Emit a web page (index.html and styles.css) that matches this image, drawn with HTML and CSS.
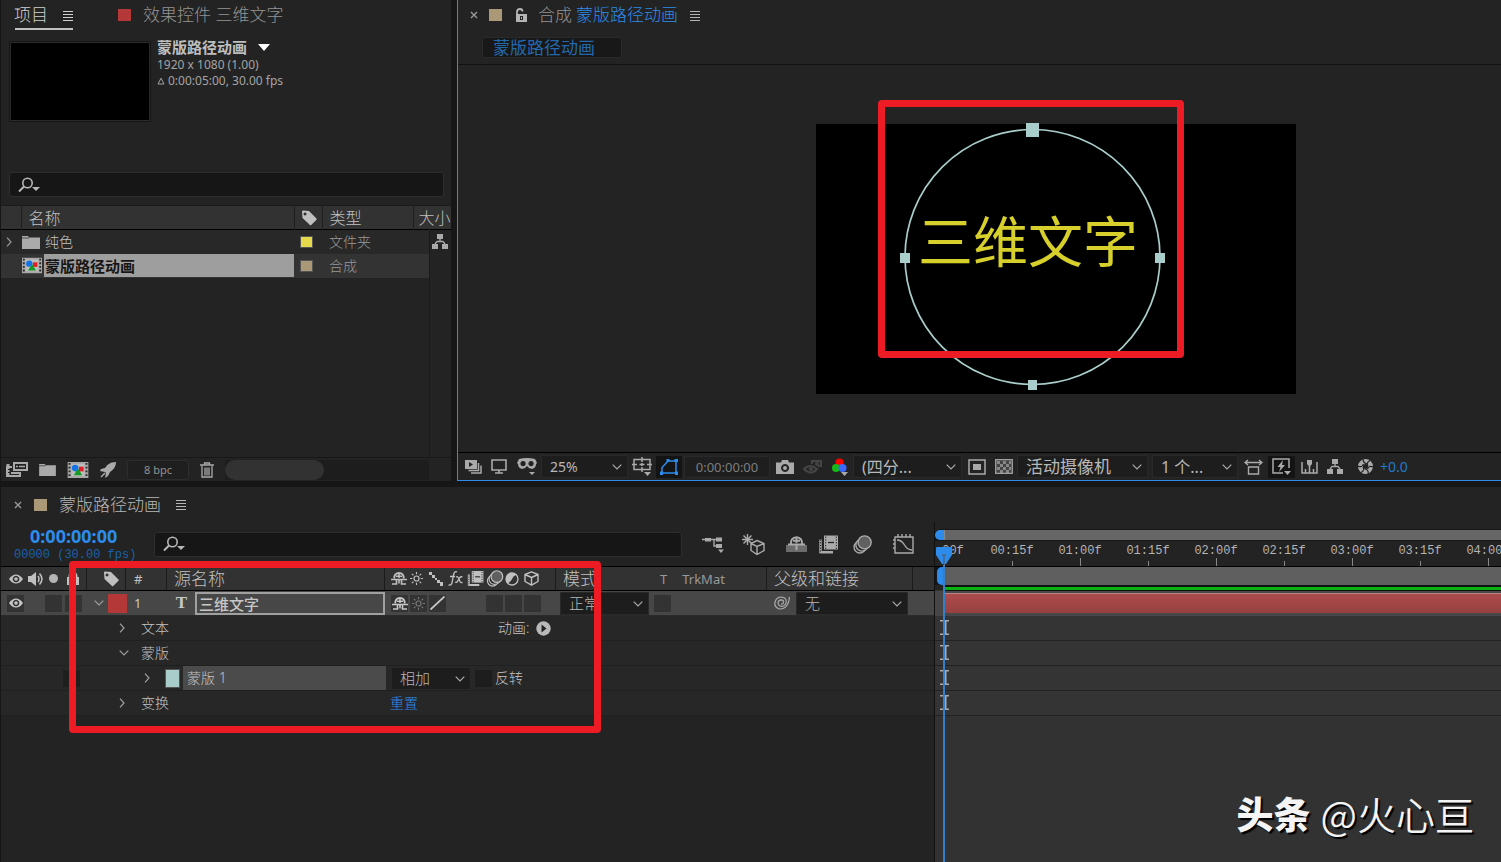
FILE: index.html
```html
<!DOCTYPE html>
<html lang="zh-CN">
<head>
<meta charset="utf-8">
<title>蒙版路径动画</title>
<link rel="stylesheet" href="styles.css">
</head>
<body>
<svg class="sprite" aria-hidden="true">
  <symbol id="menu" viewBox="0 0 12 11"><path d="M1 1.500h10M1 4.500h10M1 7.500h10M1 10.500h10" stroke="currentColor" stroke-width="1.200" fill="none"/></symbol>
  <symbol id="close" viewBox="0 0 8 8"><path d="M1 1l6 6M7 1L1 7" stroke="currentColor" stroke-width="1.400"/></symbol>
  <symbol id="search" viewBox="0 0 22 16"><circle cx="9.500" cy="6" r="4.700" fill="none" stroke="currentColor" stroke-width="1.600"/><path d="M6 9.500L1 14.500" stroke="currentColor" stroke-width="2"/><path d="M14 10h8l-4 4z" fill="currentColor"/></symbol>
  <symbol id="chev" viewBox="0 0 10 6"><path d="M.7.7L5 5 9.300.7" fill="none" stroke="currentColor" stroke-width="1.200"/></symbol>
  <symbol id="right" viewBox="0 0 6 10"><path d="M1 .7L5 5 1 9.300" fill="none" stroke="currentColor" stroke-width="1.200"/></symbol>
  <symbol id="tag" viewBox="0 0 16 16"><path fill="currentColor" fill-rule="evenodd" d="M1 1.500Q1 .5 2 .5L8 1l7.500 7.500q.5.700 0 1.200L10.200 15q-.7.500-1.200 0L1.500 8zM4 2.500a1.500 1.500 0 1 0 .1 0z"/></symbol>
  <symbol id="folder" viewBox="0 0 18 14"><path fill="currentColor" d="M0 1h6l1 1.500h11V14H0z"/><path d="M0 3h7" stroke="#333" stroke-width=".8"/></symbol>
  <symbol id="tree" viewBox="0 0 16 15"><path fill="currentColor" d="M5 0h6v5H5zM0 10h6v5H0zM10 10h6v5h-6z"/><path d="M8 5v3M3 10L5 7.500h6L13 10" fill="none" stroke="currentColor" stroke-width="1.300"/></symbol>
  <symbol id="comp" viewBox="0 0 22 17"><path fill="#a8a8a8" d="M0 0h22v17H0z"/><path d="M2 1v16M20 1v16" stroke="#292929" stroke-width="2" stroke-dasharray="2 2"/><path fill="#bdbdbd" d="M4 2h14v13H4z"/><circle cx="8" cy="6.500" r="3.500" fill="#1473e6"/><path fill="#e01f26" d="M12 5h5v5h-5z"/><path fill="#159b25" d="M11 7l4.500 7h-9z"/></symbol>
  <symbol id="eye" viewBox="0 0 14 10"><path fill="currentColor" fill-rule="evenodd" d="M0 5C4-1 10-1 14 5 10 11 4 11 0 5zM7 1.700a3.300 3.300 0 1 0 .1 0z"/><circle cx="7" cy="5" r="1.800" fill="currentColor"/></symbol>
  <symbol id="speaker" viewBox="0 0 16 14"><path fill="currentColor" d="M0 4h3l5-4v14L3 10H0z"/><path d="M10 4q2 3 0 6M11.500 1.500q5 5.500 0 11" fill="none" stroke="currentColor" stroke-width="1.500"/></symbol>
  <symbol id="lock" viewBox="0 0 12 13"><path fill="currentColor" d="M0 5h12v8H0z"/><path d="M2.500 6V4a3.500 3.500 0 0 1 7 0v2" fill="none" stroke="currentColor" stroke-width="2"/></symbol>
  <symbol id="unlock" viewBox="0 0 12 14"><path fill="currentColor" fill-rule="evenodd" d="M1 6h11v8H1zM5 8v4h3V8z"/><path d="M6.500 9v2" stroke="currentColor"/><path d="M2 7V4q0-3 3-3 2.500 0 2.500 2.500" fill="none" stroke="currentColor" stroke-width="1.800"/></symbol>
  <symbol id="shy" viewBox="0 0 16 13"><path d="M3.300 6.500C3 3 5 1 8 1s5 2 4.700 5.500" fill="none" stroke="currentColor" stroke-width="1.800"/><path d="M8 1v5M5 4.200h6" stroke="currentColor" stroke-width="1.600"/><path d="M0 7.500h16M8 7v4.500M1 12h4.500V8M15 12h-4.500V8" stroke="currentColor" stroke-width="1.600" fill="none"/></symbol>
  <symbol id="sun" viewBox="0 0 14 14"><circle cx="7" cy="7" r="2.700" fill="none" stroke="currentColor" stroke-width="1.300"/><path d="M7 0v2.500M7 11.500V14M0 7h2.500M11.500 7H14M2 2l1.700 1.700M10.300 10.300L12 12M12 2l-1.700 1.700M3.700 10.300L2 12" stroke="currentColor" stroke-width="1.200"/></symbol>
  <symbol id="dots" viewBox="0 0 14 14"><path fill="currentColor" d="M0 0h3v3H0zM3 3h3v3H3zM6 6h2v2H6zM8 8h3v3H8zM11 10h3v4h-3z"/></symbol>
  <symbol id="slash" viewBox="0 0 15 14"><path d="M.5 13.500L14.500.5" stroke="currentColor" stroke-width="1.800"/></symbol>
  <symbol id="fx" viewBox="0 0 15 15"><path d="M9 1Q6.500-.5 5.500 4L4 12q-.7 2.500-3.500 2M2 5.500h5M8 6q2-1 3 2l1 2.500q.7 1.500 2.500 1M14.500 6q-2-1-3.500 1.700L10 9.500Q9 12 7 11" fill="none" stroke="currentColor" stroke-width="1.300"/></symbol>
  <symbol id="film" viewBox="0 0 19 18"><path fill="currentColor" d="M5 0h14v14H5z"/><path d="M6.700 1v13M17.300 1v13" stroke="#222" stroke-width="1" stroke-dasharray="1.300 1.500"/><path d="M9 7h6" stroke="#222" stroke-width="1.300"/><path d="M1.500 4v12.700H14" fill="none" stroke="currentColor" stroke-width="2.400"/><path d="M1.500 4v14" stroke="#222" stroke-dasharray="1.200 1.500"/></symbol>
  <symbol id="blur" viewBox="0 0 18 18"><circle cx="6.500" cy="11.500" r="5.500" fill="#232323" stroke="currentColor" stroke-width="1.300"/><circle cx="8.500" cy="9.500" r="5.800" fill="#232323" stroke="currentColor" stroke-width="1.300"/><circle cx="11" cy="7" r="6.200" fill="#606060" stroke="currentColor" stroke-width="1.300"/></symbol>
  <symbol id="adjust" viewBox="0 0 14 14"><circle cx="7" cy="7" r="6" fill="none" stroke="currentColor" stroke-width="1.300"/><path fill="currentColor" d="M11.300 2.700A6 6 0 1 0 2.700 11.300Q6 10 7 7t4.300-4.300z"/></symbol>
  <symbol id="cube" viewBox="0 0 15 15"><path d="M7.500.8L14 3.500v7l-6.500 3.700L1 10.500v-7zM1 3.500l6.500 3 6.500-3M7.500 6.500v7.700" fill="none" stroke="currentColor" stroke-width="1.400" stroke-linejoin="round"/></symbol>
  <symbol id="spiral" viewBox="0 0 16 14"><path d="M15.300 1Q15.500 7 11.500 11 8 14 4 12.500 0 10.500 1 6 2.500 1 7.500 1q5 .5 4.700 5-.7 4.500-4.700 4.300Q4 9.800 4 6.700 4.300 4 7.200 3.800q2.500.2 2.300 2.500Q9 8.500 7 8" fill="none" stroke="currentColor" stroke-width="1.200"/></symbol>
  <symbol id="ibeam" viewBox="0 0 10 15"><path d="M1 .8h9M1 14.200h9" stroke="currentColor" stroke-width="1.500"/><path d="M6.500 1v13" stroke="currentColor" stroke-width="2"/></symbol>
</svg>

<main class="app">
  <div class="upper">
    <section class="project">
      <header class="tabs">
        <button class="tab tab-active">项目 <svg class="i-menu"><use href="#menu"/></svg></button>
        <button class="tab tab-effects"><i class="swatch red"></i>效果控件 三维文字</button>
      </header>
      <div class="summary">
        <div class="thumb"></div>
        <div class="meta">
          <h2>蒙版路径动画 <svg width="12" height="7" viewBox="0 0 12 7"><path fill="#fff" d="M0 0h12L6 7z"/></svg></h2>
          <p>1920 x 1080 (1.00)</p>
          <p><svg width="8" height="8" viewBox="0 0 8 8"><path d="M4 1.200L7 7H1z" fill="none" stroke="#a0a0a0"/></svg> 0:00:05:00, 30.00 fps</p>
        </div>
      </div>
      <label class="search"><svg class="i-search"><use href="#search"/></svg><input type="text" aria-label="搜索项目"></label>
      <table class="files">
        <colgroup><col class="c-arrow"><col class="c-name"><col class="c-tag"><col class="c-type"><col class="c-gap"><col></colgroup>
        <thead><tr><th></th><th>名称</th><th class="tagcell"><svg width="16" height="16"><use href="#tag"/></svg></th><th>类型</th><th class="size" colspan="2">大小</th></tr></thead>
        <tbody>
          <tr><td class="arrow"><svg width="6" height="10"><use href="#right"/></svg></td><td class="name"><span><svg class="i-folder"><use href="#folder"/></svg>纯色</span></td><td class="tagcell"><i class="chip yellow"></i></td><td colspan="2">文件夹</td><td class="flow"><svg width="16" height="15"><use href="#tree"/></svg></td></tr>
          <tr class="picked"><td></td><td class="name"><span><svg class="i-row-comp"><use href="#comp"/></svg><b>蒙版路径动画</b></span></td><td class="tagcell"><i class="chip tan"></i></td><td colspan="2">合成</td><td></td></tr>
        </tbody>
      </table>
      <div class="files-rest"><div></div><div class="rail"></div></div>
      <footer class="project-tools">
        <button aria-label="解释素材"><svg width="22" height="15" viewBox="0 0 22 15"><path d="M8 1h13v7H8z" fill="#222" stroke="currentColor" stroke-width="2"/><path d="M10 4.500h2M13 4.500h6" stroke="currentColor" stroke-width="1.500"/><path d="M6 5H1v9h13v-4" fill="none" stroke="currentColor" stroke-width="2"/><path d="M2 2v12" stroke="currentColor" stroke-width="3" stroke-dasharray="2 1"/><path d="M5 11h9" stroke="currentColor" stroke-width="2"/></svg></button>
        <button aria-label="新建文件夹"><svg width="17" height="13"><use href="#folder"/></svg></button>
        <button aria-label="新建合成"><svg width="22" height="16"><use href="#comp"/></svg></button>
        <button aria-label="项目设置"><svg width="16" height="16" viewBox="0 0 16 16"><path fill="currentColor" d="M16 0C10 0 7 3 5 6L1 7 0 9l5 1 1 1-1 5 3-2 2-4c3-2 6-5 6-10z"/><path d="M5 11l-4 4" stroke="currentColor" stroke-width="1.500"/></svg></button>
        <button class="bpc">8 bpc</button>
        <button aria-label="删除"><svg width="14" height="16" viewBox="0 0 14 16"><path d="M0 3h14M4.500 3V1h5v2M2 4v11h10V4M5 5.500v8M7 5.500v8M9 5.500v8" fill="none" stroke="currentColor" stroke-width="1.300"/></svg></button>
        <div class="hscroll"><i></i></div>
      </footer>
    </section>

    <section class="viewer">
      <header class="panel-title viewer-title">
        <svg class="i-close"><use href="#close"/></svg><i class="swatch tan"></i><svg class="i-unlock"><use href="#unlock"/></svg>
        <span>合成</span><strong>蒙版路径动画</strong><svg class="i-menu"><use href="#menu"/></svg>
      </header>
      <nav class="crumbs"><button>蒙版路径动画</button></nav>
      <div class="stage">
        <div class="canvas">
          <svg class="mask" width="480" height="270" viewBox="0 0 480 270">
            <text class="art" x="102" y="138">三维文字</text>
            <circle cx="216.500" cy="133" r="127.500" fill="none" stroke="#a9cdca" stroke-width="1.700"/>
            <g fill="#a9cdca"><path d="M210-1h13v14h-13zM84 129h10v10H84zM339 129h10v10h-10zM212 256h9v10h-9z"/></g>
          </svg>
          <div class="callout callout-canvas"></div>
        </div>
      </div>
      <footer class="viewer-tools">
        <button class="b1" aria-label="始终预览"><svg width="17" height="14" viewBox="0 0 17 14"><path fill="currentColor" fill-rule="evenodd" d="M0 0h12v9H0zM4 2v5l4-2.500z"/><path d="M13.500 3v7.500H3.500M16 5.500V13H6" fill="none" stroke="currentColor" stroke-width="1.500"/></svg></button>
        <button class="b2" aria-label="主查看器"><svg width="16" height="16" viewBox="0 0 16 16"><path d="M1 1h14v10H1zM8 11v3M4 14h8" fill="none" stroke="currentColor" stroke-width="1.600"/></svg></button>
        <button class="b3" aria-label="沉浸式视频"><svg width="20" height="18" viewBox="0 0 20 18"><path fill="currentColor" fill-rule="evenodd" d="M2 1Q10-1 18 1l2 4-1 1q0 4-4 5-3 0-5-3-2 3-5 3-4-1-4-5L0 5zM6 3a2.600 2.600 0 1 0 .1 0zM14 3a2.600 2.600 0 1 0 .1 0zM12 14h6l-3 3z"/></svg></button>
        <span class="select s-zoom"><select aria-label="放大率"><option>25%</option></select><svg class="i-chev"><use href="#chev"/></svg></span>
        <button class="b4" aria-label="网格和参考线"><svg width="20" height="19" viewBox="0 0 20 19"><path d="M2 2.500h16v10H2zM10 0v5M10 10v5M0 7.500h5M15 7.500h5M7.500 7.500h5M10 6v3" fill="none" stroke="currentColor" stroke-width="1.500"/><path fill="currentColor" d="M12 15h7l-3.500 4z"/></svg></button>
        <button class="b5" aria-label="蒙版和形状路径"><svg width="18" height="16" viewBox="0 0 18 16"><path d="M2 14V8.500L8 2h8v12z" fill="none" stroke="#2d8ceb" stroke-width="1.500"/><path fill="#2d8ceb" d="M0 12.500h3V16H0zM15 12.500h3V16h-3zM14.500 0H18v3h-3.500zM6.500 0h3v3h-3z"/></svg></button>
        <button class="time">0:00:00:00</button>
        <button class="b6" aria-label="拍摄快照"><svg width="18" height="14" viewBox="0 0 18 14"><path fill="currentColor" fill-rule="evenodd" d="M0 2.500h5L6 0h6l1 2.500h5V14H0zM9 4a4 4 0 1 0 .1 0z"/><circle cx="9" cy="8" r="2" fill="currentColor"/></svg></button>
        <button class="b7" aria-label="显示快照"><svg width="20" height="16" viewBox="0 0 20 16"><path d="M1 10q6-6 13 0-6 7-13 0z" fill="none" stroke="#454545" stroke-width="2"/><circle cx="8" cy="10" r="2" fill="#454545"/><path fill="none" stroke="#454545" stroke-width="2" d="M9 5V2h9v5h-3"/><circle cx="14" cy="5" r="2" fill="#454545"/></svg></button>
        <button class="b8" aria-label="通道"><svg width="17" height="18" viewBox="0 0 17 18"><circle cx="7.500" cy="4.500" r="4" fill="#f00"/><circle cx="4" cy="10" r="4" fill="#16b816"/><circle cx="10.500" cy="10" r="4" fill="#3c67ff"/><path fill="currentColor" d="M9 14h7l-3.500 4z"/></svg></button>
        <span class="select s-res"><select aria-label="分辨率"><option>(四分...</option></select><svg class="i-chev"><use href="#chev"/></svg></span>
        <button class="b9" aria-label="目标区域"><svg width="18" height="16" viewBox="0 0 18 16"><path d="M1 1h16v14H1z" fill="none" stroke="currentColor" stroke-width="1.500"/><path fill="currentColor" d="M5 5h8v6H5z"/></svg></button>
        <button class="b10" aria-label="透明网格"><svg width="18" height="15" viewBox="0 0 18 15"><path fill="#444" d="M0 0h18v15H0z"/><path d="M2 3.500h14M2 9.500h14" stroke="#888" stroke-width="3" stroke-dasharray="3 3"/><path d="M5 6.500h11M5 12.500h11" stroke="#888" stroke-width="3" stroke-dasharray="3 3"/><path d="M.7.7h16.600v13.600H.7z" fill="none" stroke="#a0a0a0" stroke-width="1.300"/></svg></button>
        <span class="select s-cam"><select aria-label="三维视图"><option>活动摄像机</option></select><svg class="i-chev"><use href="#chev"/></svg></span>
        <span class="select s-views"><select aria-label="视图布局"><option>1 个...</option></select><svg class="i-chev"><use href="#chev"/></svg></span>
        <button class="b11" aria-label="像素长宽比校正"><svg width="19" height="16" viewBox="0 0 19 16"><path d="M1 3.500h17M4 1L1 3.500 4 6M15 1l3 2.500L15 6M4.500 8h10v7h-10z" fill="none" stroke="currentColor" stroke-width="1.400"/></svg></button>
        <button class="b12" aria-label="快速预览"><svg width="19" height="18" viewBox="0 0 19 18"><path d="M11 15H1V1h16v9" fill="none" stroke="currentColor" stroke-width="1.500"/><path fill="currentColor" d="M11 2L5.500 9h3L7 14l6-7h-3zM12 13h7l-3.500 4z"/></svg></button>
        <button class="b13" aria-label="时间轴"><svg width="17" height="14" viewBox="0 0 17 14"><path d="M1 2v11h15V2M4.500 13V9M8.500 13V6M12.500 13V9" fill="none" stroke="currentColor" stroke-width="1.500"/><path fill="currentColor" d="M6 0h5v4L8.500 7 6 4z"/></svg></button>
        <button class="b14" aria-label="合成流程图"><svg width="16" height="15"><use href="#tree"/></svg></button>
        <button class="b15" aria-label="重置曝光度"><svg width="15" height="15" viewBox="0 0 15 15"><circle cx="7.500" cy="7.500" r="5" fill="none" stroke="currentColor" stroke-width="5"/><path d="M5 0Q5 4 9 5M12 1.500Q8 3.500 10 7M15 8q-4-2-5.500 2M10 15q1-4-3-5M3 13.500Q7 11.500 5 8M0 7q4 2 5.500-2" fill="none" stroke="#222" stroke-width="1.200"/></svg></button>
        <button class="exposure">+0.0</button>
      </footer>
    </section>
  </div>

  <section class="timeline">
    <header class="panel-title timeline-title">
      <svg class="i-close"><use href="#close"/></svg><i class="swatch tan"></i><span>蒙版路径动画</span><svg class="i-menu"><use href="#menu"/></svg>
    </header>
    <div class="timeline-body">
      <div class="layers">
        <div class="controls">
          <div class="clock"><b>0:00:00:00</b><small>00000 (30.00 fps)</small></div>
          <label class="search"><svg class="i-search"><use href="#search"/></svg><input type="text" aria-label="搜索图层"></label>
          <div class="toggles">
            <button aria-label="合成微型流程图"><svg width="22" height="17" viewBox="0 0 22 17"><path d="M0 3.500h16M12 3.500v6.500h4" fill="none" stroke="currentColor" stroke-width="1.400"/><path fill="currentColor" d="M3 2h6v3.500H3zM14 1.500h6v4h-6zM14 8h6v4h-6zM16 13.500h6l-3 3.500z"/></svg></button>
            <button aria-label="草图 3D"><svg width="23" height="21" viewBox="0 0 23 21"><path d="M15 6.500l7 3v7l-7 4-6-4v-7zM9 9.500l6 3 7-3M15 12.500v8M5.500 0v11M0 5.500h11M1.500 1.500l8 8M9.500 1.500l-8 8" fill="none" stroke="currentColor" stroke-width="1.400"/></svg></button>
            <button aria-label="隐藏躲避图层"><svg width="21" height="17" viewBox="0 0 21 17"><path fill="#6c6c6c" d="M0 9h21v7H0z"/><path d="M5 8Q4.500 1.500 10.500 1.200 16.500 1.500 16 8M10.500 1v6M7 4.700h7" fill="none" stroke="currentColor" stroke-width="1.900"/><path d="M2 8.500h17M10.500 8v6" stroke="currentColor" stroke-width="2"/></svg></button>
            <button aria-label="帧混合"><svg width="19" height="19"><use href="#film"/></svg></button>
            <button aria-label="运动模糊"><svg width="19" height="19"><use href="#blur"/></svg></button>
            <button aria-label="图表编辑器"><svg width="21" height="20" viewBox="0 0 21 20"><path d="M2 3h18v16H2zM5 0v3M9 0v3M13 0v3M17 0v3M0 6h2M0 10h2M0 14h2M4 6c9 0 6 10 15 10" fill="none" stroke="currentColor" stroke-width="1.400"/></svg></button>
          </div>
        </div>
        <div class="line head">
          <div class="av"><svg width="14" height="10"><use href="#eye"/></svg><svg width="16" height="14"><use href="#speaker"/></svg><i class="dot"></i><svg width="12" height="13"><use href="#lock"/></svg></div>
          <div class="tagcol"><svg width="16" height="16"><use href="#tag"/></svg></div>
          <div class="num">#</div>
          <div class="source">源名称</div>
          <div class="switches"><svg width="16" height="13"><use href="#shy"/></svg><svg width="13" height="13"><use href="#sun"/></svg><svg width="14" height="14"><use href="#dots"/></svg><svg width="15" height="15"><use href="#fx"/></svg><svg width="17" height="15"><use href="#film"/></svg><svg width="18" height="17"><use href="#blur"/></svg><svg width="14" height="14"><use href="#adjust"/></svg><svg width="15" height="15"><use href="#cube"/></svg></div>
          <div class="mode">模式</div>
          <div class="trk"><span>T</span><span>TrkMat</span></div>
          <div class="parent">父级和链接</div>
          <div></div>
        </div>
        <div class="line layer">
          <div class="av"><span class="box"><svg width="14" height="10"><use href="#eye"/></svg></span><i></i><i class="box"></i><i class="box"></i></div>
          <div class="tagcol"><svg class="i-down"><use href="#chev"/></svg><i class="label-red"></i></div>
          <div class="num">1</div>
          <div class="source"><span class="t-icon">T</span><input class="layer-name" type="text" value="三维文字" aria-label="图层名称"></div>
          <div class="switches"><span class="box"><svg width="16" height="13"><use href="#shy"/></svg></span><span class="box dim"><svg width="13" height="13"><use href="#sun"/></svg></span><span class="box"><svg width="15" height="14"><use href="#slash"/></svg></span><i></i><i></i><i class="box"></i><i class="box"></i><i class="box"></i></div>
          <div class="mode"><span class="select"><select aria-label="混合模式"><option>正常</option></select><svg class="i-chev"><use href="#chev"/></svg></span></div>
          <div class="trk"><i class="box"></i></div>
          <div class="parent"><svg width="16" height="14"><use href="#spiral"/></svg><span class="select"><select aria-label="父级"><option>无</option></select><svg class="i-chev"><use href="#chev"/></svg></span></div>
          <div></div>
        </div>
        <div class="prop"><div class="prop-name"><svg class="i-right"><use href="#right"/></svg>文本</div><div class="animate">动画: <svg width="15" height="15" viewBox="0 0 15 15"><circle cx="7.500" cy="7.500" r="7.200" fill="#b8b8b8"/><path fill="#222" d="M5.500 3.500v8l5-4z"/></svg></div></div>
        <div class="prop"><div class="prop-name"><svg class="i-down"><use href="#chev"/></svg>蒙版</div></div>
        <div class="prop mask-row"><i class="box"></i><svg class="i-right"><use href="#right"/></svg><i class="mask-color"></i><span class="mask-name">蒙版 1</span><span class="select s-mask"><select aria-label="蒙版模式"><option>相加</option></select><svg class="i-chev"><use href="#chev"/></svg></span><label class="invert"><input type="checkbox">反转</label></div>
        <div class="prop"><div class="prop-name"><svg class="i-right"><use href="#right"/></svg>变换</div><button class="reset">重置</button></div>
      </div>

      <div class="graph">
        <div class="navigator"><b class="handle"></b><i></i></div>
        <div class="ruler">
          <div class="labels"><span>00f</span><span>00:15f</span><span>01:00f</span><span>01:15f</span><span>02:00f</span><span>02:15f</span><span>03:00f</span><span>03:15f</span><span>04:00f</span></div>
          <div class="ticks"><i></i><i></i><i></i><i></i><i></i><i></i><i></i><i></i><i></i></div>
        </div>
        <div class="work"><b class="handle"></b><i></i></div>
        <div class="cache"></div>
        <div class="track"><i></i></div>
        <div class="keys"><svg width="10" height="15"><use href="#ibeam"/></svg></div>
        <div class="keys"><svg width="10" height="15"><use href="#ibeam"/></svg></div>
        <div class="keys"><svg width="10" height="15"><use href="#ibeam"/></svg></div>
        <div class="keys"><svg width="10" height="15"><use href="#ibeam"/></svg></div>
        <div class="playhead"><svg width="16" height="18" viewBox="0 0 16 18"><path fill="#2d8ceb" d="M0 1q0-1 1-1h14q1 0 1 1v7l-6 9H6L0 8z"/><path d="M8 8v10M6 8h4" stroke="#555" stroke-width="1"/></svg></div>
      </div>
    </div>
    <div class="callout callout-layers"></div>
    <div class="watermark"><b>头条</b><span>@火心亘</span></div>
  </section>
</main>
</body>
</html>
```
FILE: styles.css
```css
* { box-sizing: border-box; }
body {
  margin: 0;
  background: #161616;
  color: #c0c0c0;
  font: 300 14px/18px "Noto Sans", "Noto Sans CJK SC", sans-serif;
  overflow: hidden;
}
svg { display: block; flex: none; }
.sprite { position: absolute; width: 0; height: 0; }
i { display: block; flex: none; }
h2, p { margin: 0; }
button, input, select {
  margin: 0;
  padding: 0;
  border: 0;
  background: none;
  color: inherit;
  font: inherit;
}
button { display: flex; align-items: center; justify-content: center; white-space: nowrap; }

.app { min-height: 100vh; display: flex; flex-direction: column; gap: 6px; }
.upper { display: grid; grid-template-columns: 450px minmax(0, 1fr); gap: 6px; padding-left: 1px; }

.i-menu { width: 12px; height: 11px; }
.i-close { width: 8px; height: 8px; color: #999; }
.i-search { width: 22px; height: 16px; color: #b8b8b8; }
.i-chev { width: 10px; height: 6px; color: #aaa; }
.i-right { width: 6px; height: 10px; color: #a0a0a0; }
.i-down { width: 10px; height: 6px; color: #a0a0a0; }
.i-folder { width: 18px; height: 14px; color: #aaa; }
.i-row-comp { width: 20px; height: 17px; }
.i-unlock { width: 12px; height: 14px; }

.swatch { width: 13px; height: 12px; }
.red { background: #b53838; }
.tan { background: #ab9877; }
.yellow { background: #e6da4c; }

/* project panel */
.project { display: flex; flex-direction: column; background: #232323; min-width: 0; }
.tabs { display: flex; gap: 45px; padding-left: 14px; height: 30px; font-size: 17px; }
.tab { gap: 14px; color: #939393; }
.tab-active { width: 58px; color: #d0d0d0; border-bottom: 2px solid #c0c0c0; padding-top: 2px; }
.tab-effects { gap: 12px; }
.summary { display: flex; gap: 6px; padding: 11px 8px 0; }
.thumb { width: 142px; height: 81px; background: #000; border: 1px solid #161616; outline: 1px solid #2b2b2b; outline-offset: -2px; }
.meta { font-size: 12px; line-height: 16px; color: #a4a4a4; font-weight: 400; }
.meta h2 { display: flex; align-items: center; gap: 11px; font-size: 15px; font-weight: 700; line-height: 12px; color: #bebebe; margin-bottom: 4px; }
.meta p { display: flex; align-items: center; gap: 3px; }
.search {
  display: flex;
  align-items: center;
  height: 25px;
  padding-left: 8px;
  background: #161616;
  border: 1px solid #2e2e2e;
  border-radius: 3px;
}
.search input { flex: 1; min-width: 0; height: 20px; outline: 0; }
.project .search { margin: 50px 7px 8px 8px; }

.files { width: 100%; table-layout: fixed; border-collapse: collapse; }
.c-arrow { width: 20px; }
.c-name { width: 273px; }
.c-tag { width: 28px; }
.c-type { width: 91px; }
.c-gap { width: 16px; }
.files th, .files td { padding: 0; height: 24px; text-align: left; font-weight: 300; overflow: hidden; white-space: nowrap; }
.files thead { background: #323232; border-top: 1px solid #1a1a1a; border-bottom: 1px solid #000; }
.files th { font-size: 16px; color: #c0c0c0; padding-left: 7px; border-right: 1px solid #1e1e1e; }
.files .size { padding-left: 5px; border-right: 0; }
.files td { color: #999; padding-left: 7px; }
.files tbody tr { background: #282828; }
.files .picked { background: #333; }
.files td:last-child { background: #232323; border-left: 1px solid #1a1a1a; }
.files .arrow { padding-left: 5px; }
.files .name { padding-left: 1px; color: #c0c0c0; }
.name span { display: flex; align-items: center; gap: 5px; }
.name b { flex: 1; height: 23px; padding-left: 1px; line-height: 24px; font-weight: 700; font-size: 15px; background: #9e9e9e; color: #161616; }
.picked .name span { gap: 2px; }
.files .tagcell { padding-left: 6px; }
.chip { width: 13px; height: 12px; border: 1px solid #555; }
.files .flow { padding-left: 2px; color: #aaa; }
.files-rest { flex: 1; display: flex; justify-content: space-between; border-bottom: 1px solid #181818; }
.rail { width: 22px; border-left: 1px solid #1a1a1a; }

.project-tools { display: flex; align-items: center; gap: 11px; height: 23px; padding-left: 5px; color: #aaa; }
.project-tools .bpc { width: 62px; height: 20px; background: #1f1f1f; border: 1px solid #2d2d2d; border-radius: 3px; font-size: 11px; font-weight: 400; color: #929292; }
.hscroll { flex: 1; height: 20px; margin-right: 22px; background: #1d1d1d; }
.hscroll i { width: 99px; height: 20px; border-radius: 10px; background: #323232; }

/* composition viewer */
.viewer { display: flex; flex-direction: column; min-width: 0; background: #232323; border-left: 1px solid #2d8ceb; border-bottom: 1px solid #2d8ceb; }
.panel-title { display: flex; align-items: center; font-size: 17px; }
.viewer-title { height: 30px; padding-left: 12px; gap: 11px; color: #939393; }
.viewer-title strong { margin-left: -7px; font-weight: 300; color: #2d8ceb; }
.viewer-title .i-menu { color: #b4b4b4; }
.viewer-title .i-unlock { color: #b4b4b4; }
.viewer-title .swatch { margin-right: 2px; }
.crumbs { height: 35px; padding: 7px 0 0 24px; border-bottom: 1px solid #111; }
.crumbs button { width: 140px; height: 21px; justify-content: flex-start; padding-left: 10px; background: #181818; border: 1px solid #2a2a2a; border-radius: 3px; font-size: 17px; font-weight: 400; color: #2468ac; }
.stage { flex: 1; padding: 59px 0 58px 358px; border-bottom: 1px solid #000; }
.canvas { position: relative; width: 480px; height: 270px; background: #000; }
.mask { overflow: visible; }
.art { font: 400 55px "Noto Sans CJK SC", sans-serif; fill: #d6cf2c; }
.callout { position: absolute; border: 7px solid #ed1c24; border-radius: 4px; pointer-events: none; }
.callout-canvas { left: 62px; top: -24px; width: 306px; height: 258px; }
.viewer-tools { display: flex; align-items: center; height: 27px; padding-left: 6px; color: #aaa; font-size: 14px; font-weight: 400; overflow: hidden; }
.viewer-tools button { flex: none; height: 22px; }
.b1 { width: 18px; margin-right: 8px; }
.b2 { width: 17px; margin-right: 10px; }
.b3 { width: 20px; margin-right: 4px; }
.b4 { width: 20px; margin: 0 4px; }
.b5 { width: 26px; background: #141414; }
.viewer-tools .time { width: 86px; margin: 0 6px 0 2px; background: #1e1e1e; border: 1px solid #292929; color: #7d7d7d; font-size: 13px; }
.b6 { width: 18px; margin-right: 9px; }
.b7 { width: 20px; margin-right: 9px; }
.b8 { width: 17px; margin-right: 4px; }
.b9 { width: 18px; margin: 0 9px 0 6px; }
.b10 { width: 18px; margin-right: 4px; }
.b11 { width: 19px; margin: 0 5px 0 6px; }
.b12 { width: 27px; margin-right: 5px; background: #141414; }
.b13 { width: 18px; margin-right: 9px; }
.b14 { width: 16px; margin-right: 14px; }
.b15 { width: 16px; margin-right: 7px; }
.viewer-tools .exposure { color: #2478cb; }

.select { position: relative; display: block; flex: none; height: 23px; background: #1d1d1d; border: 1px solid #292929; color: #b8b8b8; }
.select select { display: block; width: 100%; height: 100%; padding: 0 8px; appearance: none; outline: 0; }
.select svg { position: absolute; right: 5px; top: 8px; pointer-events: none; }
.s-zoom { width: 87px; }
.s-res { width: 109px; font-size: 16px; }
.s-cam { width: 131px; margin-right: 4px; font-size: 17px; }
.s-views { width: 86px; font-size: 16px; }

/* timeline */
.timeline { position: relative; flex: 1; display: flex; flex-direction: column; margin-left: 1px; background: #232323; }
.timeline-title { height: 35px; padding-left: 13px; gap: 12px; color: #b8b8b8; }
.timeline-title .i-menu { margin-left: 2px; }
.timeline-body { flex: 1; display: grid; grid-template-columns: 933px minmax(0, 1fr); }
.layers { min-width: 0; }
.controls { display: flex; align-items: center; height: 45px; padding-left: 13px; border-bottom: 1px solid #000; }
.clock { width: 140px; height: 44px; color: #2d8ceb; }
.clock b { display: block; padding: 5px 0 0 16px; font: 700 18px/18px "Noto Sans", sans-serif; }
.clock small { display: block; font: 12px/20px "Liberation Mono", monospace; color: #1a61a8; white-space: nowrap; }
.controls .search { width: 528px; }
.toggles { display: grid; grid-template-columns: 40px 44px 33px 34px 40px auto; align-items: center; justify-items: start; margin-left: 20px; color: #aaa; }

.line { display: grid; grid-template-columns: 86px 39px 41px 218px 171px 96px 115px 146px 1fr; height: 24px; }
.line > div { display: flex; align-items: center; min-width: 0; }
.head { background: #323232; border-bottom: 1px solid #000; font-size: 17px; }
.head > :not(.mode):not(:last-child) { box-shadow: inset -1px 0 #1b1b1b; }
.head .av { gap: 5px; padding-left: 8px; }
.dot { width: 9px; height: 9px; margin-right: 4px; border-radius: 50%; background: #b4b4b4; }
.head .tagcol { padding-left: 16px; }
.head .num { padding-left: 8px; font-size: 13px; font-weight: 400; }
.head .source, .head .mode, .head .parent { padding-left: 7px; }
.switches { padding-left: 6px; }
.line .switches { display: grid; grid-template-columns: repeat(8, 19px); align-items: center; }
.head .trk { padding-left: 8px; gap: 15px; font-size: 13px; font-weight: 400; color: #999; }
.layer { height: 25px; background: #474747; color: #c8c8c8; border-bottom: 1px solid #2a2a2a; }
.layer .av { gap: 3px; padding-left: 6px; }
.layer .av > :nth-child(2) { width: 15px; }
.box { display: flex; align-items: center; justify-content: center; width: 17px; height: 17px; flex: none; background: #333; }
.dim { color: #777; }
.layer .tagcol { gap: 4px; padding-left: 7px; }
.label-red { width: 19px; height: 19px; background: #b53838; }
.layer .num { padding-left: 8px; font-size: 13px; font-weight: 400; }
.layer .source { padding-left: 8px; gap: 7px; }
.t-icon { width: 13px; font: 700 17px/20px "Liberation Serif", serif; text-align: center; }
.layer-name { width: 190px; height: 23px; padding-left: 2px; border: 2px solid #a0a0a0; font-size: 15px; font-weight: 500; outline: 0; }
.layer .mode { padding-left: 4px; }
.mode .select { width: 89px; font-size: 15px; }
.layer .trk { padding-left: 2px; }
.layer .parent { padding-left: 7px; gap: 6px; color: #aaa; }
.parent .select { width: 112px; font-size: 15px; }

.prop { display: grid; grid-template-columns: 389px 1fr; align-items: center; height: 25px; background: #272727; border-bottom: 1px solid #202020; color: #c4c4c4; }
.prop-name { display: grid; grid-template-columns: 22px 1fr; align-items: center; padding-left: 118px; }
.animate { display: flex; align-items: center; gap: 7px; padding-left: 108px; }
.mask-row { display: flex; }
.mask-row > .box { margin: 0 64px 0 62px; background: #1f1f1f; }
.mask-color { width: 15px; height: 19px; margin: 0 3px 0 15px; background: #a9cdca; border: 1px solid #555; }
.mask-name { width: 203px; height: 24px; padding-left: 4px; line-height: 23px; background: #4b4b4b; }
.s-mask { width: 80px; margin-left: 5px; font-size: 15px; }
.invert { display: flex; align-items: center; gap: 3px; margin-left: 4px; }
.invert input { appearance: none; width: 17px; height: 17px; background: #1d1d1d; }
.reset { justify-self: start; color: #2d8ceb; }

.graph { position: relative; min-width: 0; padding-top: 7px; overflow: hidden; background: linear-gradient(#232323 68px, #323232 68px); border-left: 1px solid #111; }
.navigator { display: flex; height: 12px; padding: 1px 0; background: #161616; border-radius: 6px 0 0 0; }
.navigator i { flex: 1; background: #666; border-left: 1px solid #888; }
.handle { flex: none; background: #2d8ceb; border-radius: 5px 0 0 5px; }
.navigator .handle { width: 9px; }
.ruler { height: 26px; padding-left: 9px; border-bottom: 1px solid #000; }
.labels { display: flex; height: 17px; margin-left: -34px; }
.labels span { flex: none; width: 68px; text-align: center; font: 12px/20px "Liberation Mono", monospace; color: #b4b4b4; }
.labels span:first-child { padding-left: 18px; }
.ticks { display: flex; align-items: flex-end; height: 8px; }
.ticks i { flex: none; width: 68px; height: 5px; border-left: 1px solid #888; }
.ticks i:nth-child(odd) { height: 8px; }
.work { display: flex; height: 18px; padding-left: 2px; background: #161616; }
.work .handle { width: 7px; }
.work i { flex: 1; background: #5f5f5f; }
.cache { height: 6px; margin-left: 9px; background: #08b312; border-top: 2px solid #111; border-bottom: 1px solid #111; }
.track { height: 25px; padding: 2px 0 3px 9px; background: #474747; }
.track i { height: 20px; background: linear-gradient(#ad4c4c, #974040); border-top: 1px solid #b98585; }
.keys { height: 25px; padding: 4px 0 0 4px; background: #343434; border-bottom: 1px solid #222; color: #aaa; }
.playhead { position: absolute; left: 1px; top: 25px; bottom: 0; width: 16px; }
.playhead::after { content: ""; position: absolute; left: 7px; top: 18px; bottom: 0; width: 2px; background: #347fc7; }

.callout-layers { left: 68px; top: 74px; width: 532px; height: 172px; }
.watermark { position: absolute; right: 27px; bottom: 25px; display: flex; align-items: center; gap: 10px; font-family: "Noto Sans CJK SC", sans-serif; font-size: 39px; line-height: 48px; color: #f4f4f4; text-shadow: 2px 2px 1px #000; }
.watermark b { font-size: 37px; font-weight: 900; }
.watermark span { font-weight: 350; }
```
